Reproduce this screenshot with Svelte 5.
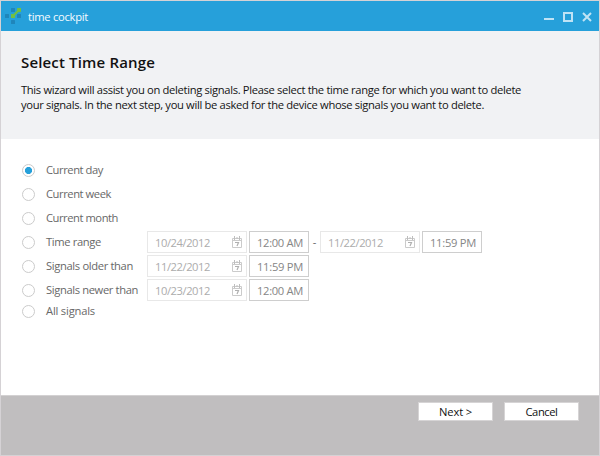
<script>
  const rows = [
    { label: 'Current day', width: 57 },
    { label: 'Current week', width: 65 },
    { label: 'Current month', width: 72 },
    { label: 'Time range', width: 55, fields: [['10/24/2012', '12:00 AM'], ['11/22/2012', '11:59 PM']] },
    { label: 'Signals older than', width: 87, fields: [['11/22/2012', '11:59 PM']] },
    { label: 'Signals newer than', width: 92, fields: [['10/23/2012', '12:00 AM']] },
    { label: 'All signals', width: 49 }
  ];
  let selected = $state(0);

  // Spreads the letters of a label so that it fills the given width.
  function fit(node, width) {
    const natural = node.getBoundingClientRect().width;
    node.style.letterSpacing = `${(width - natural) / node.textContent.length}px`;
  }
</script>

<main class="window">
  <header class="titlebar">
    <svg class="logo" width="18" height="18" viewBox="0 0 18 18">
      <g fill="#1f86bb">
        <rect x="6" y="0" width="4" height="4" rx=".5" />
        <rect x="0" y="6" width="4" height="4" rx=".5" />
        <rect x="12" y="6" width="4" height="4" rx=".5" />
        <rect x="6" y="12" width="4" height="4" rx=".5" />
      </g>
      <path d="M12.5 0H16V3.5L15.5 4H13.5L10 7.5V10H6V6H8.5L12 2.5V.5Z" fill="#72bf44" />
    </svg>
    <span class="apptitle"><span use:fit={60}>time cockpit</span></span>
    <svg class="controls" width="50" height="12" viewBox="0 0 50 12">
      <path d="M0 7H10" stroke="#bfe3f5" stroke-width="2" />
      <rect x="20" y="1" width="8" height="8" fill="none" stroke="#bfe3f5" stroke-width="2" />
      <path d="M39 1L47 9M47 1L39 9" stroke="#bfe3f5" stroke-width="2" />
    </svg>
  </header>

  <section class="intro">
    <h1><span use:fit={134}>Select Time Range</span></h1>
    <p>
      <span use:fit={500}>This wizard will assist you on deleting signals. Please select the time range for which you want to delete</span>
    </p>
    <p>
      <span use:fit={463}>your signals. In the next step, you will be asked for the device whose signals you want to delete.</span>
    </p>
  </section>

  <section class="options">
    {#each rows as row, i}
      <div class="row" class:last={i === rows.length - 1}>
        <button class="radio" class:on={selected === i} aria-label={row.label} onclick={() => (selected = i)}></button>
        <div class="label"><span use:fit={row.width}>{row.label}</span></div>
        {#each row.fields ?? [] as [date, time], j}
          {#if j > 0}<span class="dash">-</span>{/if}
          <div class="date">
            <span use:fit={55}>{date}</span>
            <svg width="10" height="12" viewBox="0 0 10 12">
              <path d="M.5 2.5H9.5V11.5H.5ZM0 4.5H10" fill="none" stroke="#cbcbcb" />
              <path d="M2.5 0V4M5 1V3M7.5 0V4" stroke="#bebebe" />
              <path d="M3 6.5H6.5L5 10" fill="none" stroke="#b0b0b0" stroke-width="1.2" />
            </svg>
          </div>
          <div class="time"><span use:fit={46}>{time}</span></div>
        {/each}
      </div>
    {/each}
  </section>

  <footer>
    <button class="action"><span use:fit={33}>Next &gt;</span></button>
    <button class="action"><span use:fit={32}>Cancel</span></button>
  </footer>
</main>

<style>
  :global(body) { margin: 0; }
  .window {
    box-sizing: border-box;
    width: 600px;
    height: 456px;
    border: 1px solid #d5d2d5;
    background: #fff;
    display: flex;
    flex-direction: column;
    overflow: hidden;
    font: 11.2px/16px "Open Sans", "Noto Sans", sans-serif;
    white-space: nowrap;
  }
  span { display: inline-block; }
  svg { display: block; flex: none; }
  .titlebar {
    height: 30px;
    flex: none;
    background: #26a0da;
    display: flex;
    align-items: flex-start;
    color: #f4fbff;
  }
  .logo { margin: 7px 0 0 4px; }
  .apptitle { margin: 8px 0 0 5px; }
  .controls { margin: 11px 5px 0 auto; }
  .intro {
    box-sizing: border-box;
    height: 108px;
    flex: none;
    background: #f1f2f4;
    padding: 21px 20px 0;
    color: #141414;
  }
  h1 {
    margin: 0 0 9px;
    font-size: 15px;
    line-height: 21px;
    font-weight: 600;
    color: #111;
  }
  p { margin: 0; height: 15px; line-height: 15px; }
  .options {
    flex: 1;
    padding: 19px 0 0 21px;
    color: #686868;
  }
  .row { height: 24px; display: flex; align-items: center; }
  .row.last { height: 18px; }
  .radio {
    box-sizing: border-box;
    width: 13px;
    height: 13px;
    padding: 0;
    border: 1px solid #cbcbcb;
    border-radius: 50%;
    background: #fff;
    flex: none;
  }
  .radio.on { background: radial-gradient(circle, #26a0da 3.2px, #fff 3.9px); }
  .label { width: 101px; margin-left: 11px; flex: none; }
  .date, .time {
    box-sizing: border-box;
    height: 22px;
    display: flex;
    align-items: center;
    flex: none;
  }
  .date {
    width: 100px;
    border: 1px solid #e8e8e8;
    padding: 2px 4px 0 7px;
    justify-content: space-between;
    color: #acacac;
  }
  .date svg { margin-top: -2px; }
  .time {
    width: 60px;
    margin-left: 2px;
    border: 1px solid #cecece;
    padding: 2px 0 0 7px;
    color: #868686;
  }
  .dash { width: 11px; text-align: center; }
  footer {
    box-sizing: border-box;
    height: 60px;
    flex: none;
    background: #c0bebf;
    border-top: 1px solid #d3d1d2;
    padding: 6px 20px 0 0;
    display: flex;
    justify-content: flex-end;
    gap: 11px;
  }
  .action {
    box-sizing: border-box;
    width: 75px;
    height: 19px;
    border: 1px solid #d6d4d5;
    padding: 0;
    background: #fff;
    color: #111;
    font: inherit;
    line-height: 17px;
  }
</style>
